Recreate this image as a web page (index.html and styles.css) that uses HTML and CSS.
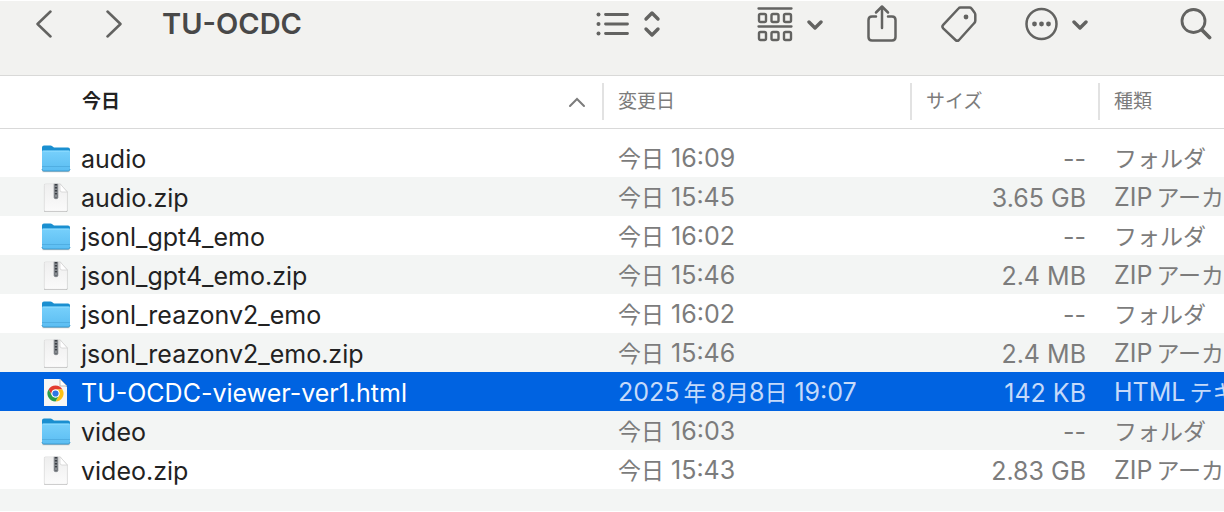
FILE: index.html
```html
<!DOCTYPE html>
<html lang="ja">
<head>
<meta charset="utf-8">
<title>TU-OCDC</title>
<link rel="stylesheet" href="styles.css">
</head>
<body>
<svg class="defs" aria-hidden="true">
  <defs>
    <linearGradient id="folder-front" x1="0" y1="0" x2="0" y2="1"><stop offset="0" stop-color="#77d0fb"/><stop offset="1" stop-color="#5bbdf2"/></linearGradient>
    <linearGradient id="paper" x1="0" y1="0" x2="0" y2="1"><stop offset="0" stop-color="#eeeeee"/><stop offset="1" stop-color="#fbfbfb"/></linearGradient>
  </defs>
  <symbol id="folder" viewBox="0 0 30 30">
    <path d="M1.500 27h27v1.200h-27z" fill="#000" opacity=".25"/>
    <path d="M1 3.500Q1 1.500 3 1.500h6.500q1 0 1.800.7l1 .8q.6.500 1.500.5H27q2 0 2 2V12H1z" fill="#1a8fd0"/>
    <path d="M1 7.800Q1 6.500 2.500 6.500h25Q29 6.500 29 7.800V25q0 2-2 2H3q-2 0-2-2z" fill="url(#folder-front)"/>
    <path d="M1.500 7.200h27" stroke="#8fdcff" stroke-width="1"/>
    <path d="M1 22.500h28" stroke="#4ba9dd" stroke-width=".8"/>
    <path d="M1 25q0 2 2 2h24q2 0 2-2" fill="none" stroke="#3b9bd0" stroke-width="1"/>
  </symbol>
  <symbol id="zip" viewBox="0 0 30 30">
    <path d="M4.500 1h14.700l7.300 8v18.500q0 1.500-1.500 1.500H4.500Q3 29 3 27.500v-25Q3 1 4.500 1z" fill="#000" opacity=".3"/>
    <path d="M4.500.7h14.500l7.300 8.300v17.800q0 1.500-1.500 1.500H4.700q-1.500 0-1.500-1.500V2.200Q3.200.7 4.500.7z" fill="url(#paper)" stroke="#dedede" stroke-width=".5"/>
    <path d="M19 .7V7q0 2 2 2h5.300z" fill="#fff" stroke="#cfcfcf" stroke-width=".7"/>
    <path d="M12.700.7h4.600v13.600q0 2-2.300 2t-2.300-2z" fill="#85898e"/>
    <path d="M15 1v10" stroke="#3b3f44" stroke-width="2.200" stroke-dasharray="1.500 1.500"/>
    <path d="M14.200 11.500h1.600v3h-1.600z" fill="#d1d4d7" stroke="#4b4f54" stroke-width=".7"/>
  </symbol>
  <symbol id="html" viewBox="0 0 30 30">
    <path d="M3 1h16l7 8v19H3z" fill="#f7f6f4"/>
    <path d="M19 1v7h7z" fill="#fff" stroke="#aaa" stroke-width=".8"/>
    <circle cx="14.500" cy="15.500" r="8" fill="#fff"/>
    <path d="M7.570 11.500A8 8 0 0 1 21.430 11.500H14.500A4 4 0 0 0 11 17.500z" fill="#e33b2e"/>
    <path d="M21.430 11.500A8 8 0 0 1 14.500 23.500L18 17.500A4 4 0 0 0 14.500 11.500z" fill="#fbc116"/>
    <path d="M14.500 23.500A8 8 0 0 1 7.570 11.500L11 17.500A4 4 0 0 0 18 17.500z" fill="#2a9c4a"/>
    <circle cx="14.500" cy="15.500" r="4" fill="#fff"/>
    <circle cx="14.500" cy="15.500" r="3.100" fill="#2f76e4"/>
  </symbol>
  <symbol id="down" viewBox="0 0 16 32"><path d="M2 14l6 6 6-6" stroke-width="3.400"/></symbol>
</svg>
<main class="window">
  <header class="toolbar">
    <nav class="history">
      <button type="button" aria-label="戻る"><svg class="icon" width="16" height="32"><path d="M14.500 3.500L1.500 16l13 12.500"/></svg></button>
      <button type="button" aria-label="進む"><svg class="icon" width="16" height="32"><path d="M1.500 3.500L14.500 16 1.500 28.500"/></svg></button>
    </nav>
    <h1 class="title">TU-OCDC</h1>
    <div class="actions">
      <button type="button" class="view" aria-label="リスト表示"><svg class="icon" width="33" height="32"><path d="M9.500 6.500h22M9.500 16h22M9.500 25.500h22" stroke-width="2.800"/><g class="dot"><circle cx="2.500" cy="6.500" r="2"/><circle cx="2.500" cy="16" r="2"/><circle cx="2.500" cy="25.500" r="2"/></g></svg><svg class="icon" width="18" height="32"><path d="M3 11l6-6 6 6M3 21l6 6 6-6" stroke-width="3.400"/></svg></button>
      <button type="button" class="group" aria-label="グループ分け"><svg class="icon" width="36" height="36"><path d="M1.500 2.500h33M1.500 20.500h33" stroke-width="2.300"/><g stroke-width="2.400"><rect x="2" y="8" width="7" height="8" rx="1.500"/><rect x="14.500" y="8" width="7" height="8" rx="1.500"/><rect x="27" y="8" width="7" height="8" rx="1.500"/><rect x="2" y="26" width="7" height="8" rx="1.500"/><rect x="14.500" y="26" width="7" height="8" rx="1.500"/><rect x="27" y="26" width="7" height="8" rx="1.500"/></g></svg><svg class="icon" width="16" height="32"><use href="#down"/></svg></button>
      <button type="button" aria-label="共有"><svg class="icon" width="30" height="40"><path d="M9 12.500H5q-3.500 0-3.500 3.500v17q0 3.500 3.500 3.500h20q3.500 0 3.500-3.500V16q0-3.500-3.500-3.500h-4M15 24V3M9 8.500L15 2.500l6 6"/></svg></button>
      <button type="button" aria-label="タグ"><svg class="icon" width="36" height="38"><path d="M19.500 2.500h9q1.200 0 2 1l3 4q.8 1 .800 2.200v6q0 1.300-1 2.300L18 35q-1.800 1.600-3.500 0L2.200 23.300q-1.600-1.800 0-3.500L17.500 3.500q.8-1 2-1z"/><circle class="dot" cx="25" cy="12" r="2.400"/></svg></button>
      <button type="button" class="more" aria-label="その他"><svg class="icon" width="33" height="34"><circle cx="16.500" cy="17" r="15"/><g class="dot"><circle cx="9.500" cy="17" r="2.400"/><circle cx="16.500" cy="17" r="2.400"/><circle cx="23.500" cy="17" r="2.400"/></g></svg><svg class="icon" width="16" height="32"><use href="#down"/></svg></button>
      <button type="button" class="search" aria-label="検索"><svg class="icon" width="32" height="34"><circle cx="13.500" cy="14" r="11.500" stroke-width="2.800"/><path d="M22 23l7.500 7.500" stroke-width="3.800"/></svg></button>
    </div>
  </header>
  <table class="files">
    <colgroup><col><col class="c-date"><col class="c-size"><col class="c-kind"></colgroup>
    <thead>
      <tr>
        <th scope="col" aria-sort="ascending"><button type="button" class="sorted">今日<svg class="sort" width="18" height="14"><path d="M2 11l7-7 7 7"/></svg></button></th>
        <th scope="col"><button type="button">変更日</button></th>
        <th scope="col"><button type="button">サイズ</button></th>
        <th scope="col"><button type="button">種類</button></th>
      </tr>
    </thead>
    <tbody>
      <tr><td><span class="name"><svg width="30" height="30"><use href="#folder"/></svg>audio</span></td><td><span class="ja">今日</span> 16:09</td><td>--</td><td><span class="ja">フォルダ</span></td></tr>
      <tr><td><span class="name"><svg width="30" height="30"><use href="#zip"/></svg>audio.zip</span></td><td><span class="ja">今日</span> 15:45</td><td>3.65 GB</td><td>ZIP<span class="ja after">アーカイブ</span></td></tr>
      <tr><td><span class="name"><svg width="30" height="30"><use href="#folder"/></svg>jsonl_gpt4_emo</span></td><td><span class="ja">今日</span> 16:02</td><td>--</td><td><span class="ja">フォルダ</span></td></tr>
      <tr><td><span class="name"><svg width="30" height="30"><use href="#zip"/></svg>jsonl_gpt4_emo.zip</span></td><td><span class="ja">今日</span> 15:46</td><td>2.4 MB</td><td>ZIP<span class="ja after">アーカイブ</span></td></tr>
      <tr><td><span class="name"><svg width="30" height="30"><use href="#folder"/></svg>jsonl_reazonv2_emo</span></td><td><span class="ja">今日</span> 16:02</td><td>--</td><td><span class="ja">フォルダ</span></td></tr>
      <tr><td><span class="name"><svg width="30" height="30"><use href="#zip"/></svg>jsonl_reazonv2_emo.zip</span></td><td><span class="ja">今日</span> 15:46</td><td>2.4 MB</td><td>ZIP<span class="ja after">アーカイブ</span></td></tr>
      <tr class="selected"><td><span class="name"><svg width="30" height="30"><use href="#html"/></svg>TU-OCDC-viewer-ver1.html</span></td><td>2025<span class="ja after before">年</span>8<span class="ja">月</span>8<span class="ja">日</span> 19:07</td><td>142 KB</td><td>HTML<span class="ja after">テキスト</span></td></tr>
      <tr><td><span class="name"><svg width="30" height="30"><use href="#folder"/></svg>video</span></td><td><span class="ja">今日</span> 16:03</td><td>--</td><td><span class="ja">フォルダ</span></td></tr>
      <tr><td><span class="name"><svg width="30" height="30"><use href="#zip"/></svg>video.zip</span></td><td><span class="ja">今日</span> 15:43</td><td>2.83 GB</td><td>ZIP<span class="ja after">アーカイブ</span></td></tr>
    </tbody>
  </table>
  <div class="rest"></div>
</main>
</body>
</html>
```

FILE: styles.css
```css
* { box-sizing: border-box; }
body {
  margin: 0;
  background: #fff;
  font-family: Inter, "Noto Sans CJK JP", sans-serif;
}
.defs { position: absolute; width: 0; height: 0; }
button {
  margin: 0;
  padding: 0;
  border: 0;
  background: none;
  color: inherit;
  font: inherit;
}
.window {
  display: flex;
  flex-direction: column;
  min-height: 100vh;
  overflow: hidden;
  border-top: 1px solid #fff;
  border-bottom: 1px solid #fff;
}
.toolbar {
  display: flex;
  align-items: center;
  padding: 3px 12px 31px 36px;
  background: #f2f2f0;
  border-bottom: 1px solid #d9d9d8;
}
.toolbar button { display: flex; align-items: center; }
.history { display: flex; gap: 54px; }
.title {
  margin: 0 0 0 40px;
  color: #484848;
  font-size: 29px;
  font-weight: 600;
  line-height: 40px;
}
.actions { display: flex; align-items: center; gap: 44px; margin-left: auto; }
.view, .group, .more { gap: 14px; }
.actions .group { margin-left: 52px; }
.actions .more { margin-left: 4px; }
.actions .search { margin-left: 48px; }
.icon {
  display: block;
  fill: none;
  stroke: #636361;
  stroke-width: 2.5;
  stroke-linecap: round;
  stroke-linejoin: round;
}
.dot { fill: #636361; stroke: none; }
.files {
  width: 100%;
  table-layout: fixed;
  border-collapse: collapse;
  color: #7c7c7c;
  font-size: 25px;
  line-height: 36px;
}
.c-date { width: 308px; }
.c-size { width: 188px; }
.c-kind { width: 126px; }
th {
  height: 52px;
  padding: 0;
  border-bottom: 1px solid #d9d9d9;
  font-size: 19px;
  font-weight: 400;
}
th button {
  display: flex;
  align-items: center;
  justify-content: space-between;
  width: 100%;
  height: 37px;
  padding: 0 16px 0 14px;
  border-left: 2px solid #e2e2e2;
}
th .sorted { padding-left: 82px; border-left: 0; color: #222; font-weight: 600; }
.sort { fill: none; stroke: #7c7c7c; stroke-width: 2; stroke-linecap: round; }
tbody::before { content: ""; display: table-row; height: 10px; }
td {
  height: 39px;
  padding: 2px 0 0 16px;
  overflow: hidden;
  white-space: nowrap;
}
td:nth-child(1) { padding-left: 41px; color: #222; }
td:nth-child(3) { padding-right: 12px; text-align: right; }
.name { display: flex; align-items: center; gap: 10px; }
.name svg { flex: none; }
.ja { font-size: 23px; }
.after { margin-left: 4px; }
.before { margin-right: 4px; }
tbody tr:nth-child(even) { background: #f3f5f4; }
tbody .selected { background: #0063e1; }
.selected td { color: #c5dafa; }
.selected td:first-child { color: #fff; }
.rest {
  flex: 1;
  background: repeating-linear-gradient(#f3f5f4 0 39px, #fff 39px 78px);
}
```
